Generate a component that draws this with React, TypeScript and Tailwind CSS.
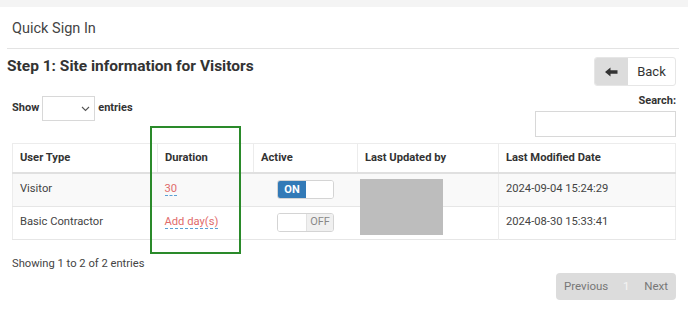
import React from 'react';

const rows = [
  { type: 'Visitor', duration: '30', active: true, date: '2024-09-04 15:24:29' },
  { type: 'Basic Contractor', duration: 'Add day(s)', active: false, date: '2024-08-30 15:33:41' },
];

const Toggle = ({ on }: { on: boolean }) => (
  <div className="mx-auto flex h-[19px] w-[57px] overflow-hidden rounded-[3px] border border-[#d4d4d4] bg-white">
    {on ? (
      <>
        <div className="flex w-[28px] items-center justify-center bg-[#337ab7] text-[11px] font-bold text-white">ON</div>
        <div className="flex-1 bg-white" />
      </>
    ) : (
      <>
        <div className="w-[28px] bg-white" />
        <div className="flex flex-1 items-center justify-center border-l border-[#e2e2e2] bg-[#f0f0f0] text-[11px] text-[#888]">OFF</div>
      </>
    )}
  </div>
);

const App = () => {
  return (
    <div className="relative h-[315px] w-[688px] overflow-hidden bg-white font-['Roboto',sans-serif] text-[#333]">
      <div className="h-[7px] bg-[#f4f4f4]" />

      {/* panel title */}
      <div className="mr-[9px] ml-[7px] flex h-[42px] items-center border-b border-[#e3e3e3] pt-[2px] pl-[5px] text-[14.5px] text-[#444]">
        Quick Sign In
      </div>

      <div className="pr-[12px] pl-[7px]">
        <div className="flex items-start justify-between pt-[8px]">
          <h3 className="text-[15.5px] leading-[19px] font-bold text-[#333]">Step 1: Site information for Visitors</h3>
          <button className="flex h-[29px] w-[82px] overflow-hidden rounded-[3px] border border-[#e6e6e6] bg-white">
            <span className="flex h-full w-[33px] items-center justify-center bg-[#dcdcdc]">
              <svg width="13" height="10" viewBox="0 0 13 10">
                <path d="M0 5 L5.5 0.5 L5.5 3.3 L12.5 3.3 L12.5 6.7 L5.5 6.7 L5.5 9.5 Z" fill="#333" />
              </svg>
            </span>
            <span className="flex flex-1 items-center justify-center text-[13px] text-[#333]">Back</span>
          </button>
        </div>

        <div className="flex items-start justify-between pl-[5px]">
          <div className="mt-[10px] flex items-center gap-[3px] text-[11px] font-bold">
            <span>Show</span>
            <div className="flex h-[25px] w-[53px] items-center justify-end border border-[#d8d8d8] pr-[4px]">
              <svg width="9" height="6" viewBox="0 0 9 6">
                <path d="M1 1 L4.5 4.5 L8 1" stroke="#555" strokeWidth="1.1" fill="none" />
              </svg>
            </div>
            <span>entries</span>
          </div>
          <div className="mt-[7px] flex flex-col items-end">
            <span className="text-[11px] font-bold">Search:</span>
            <div className="mt-[1px] h-[26px] w-[141px] border border-[#d8d8d8]" />
          </div>
        </div>

        <table className="mt-[6px] ml-[5px] w-[663px] table-fixed border-collapse border border-[#ececec] text-[11.2px]">
          <colgroup>
            <col className="w-[145px]" />
            <col className="w-[96px]" />
            <col className="w-[104px]" />
            <col className="w-[141px]" />
            <col className="w-[177px]" />
          </colgroup>
          <thead>
            <tr className="h-[30px] border-b-2 border-[#e0e0e0] text-left">
              <th className="border-r border-[#ececec] px-[7px] pt-[2px] font-bold">User Type</th>
              <th className="border-r border-[#ececec] px-[7px] pt-[2px] font-bold">Duration</th>
              <th className="border-r border-[#ececec] px-[7px] pt-[2px] font-bold">Active</th>
              <th className="border-r border-[#ececec] px-[7px] pt-[2px] font-bold">Last Updated by</th>
              <th className="px-[7px] pt-[2px] font-bold">Last Modified Date</th>
            </tr>
          </thead>
          <tbody>
            {rows.map((r, i) => (
              <tr key={r.type} className={`h-[33px] border-b border-[#e6e6e6] ${i === 0 ? 'bg-[#f9f9f9]' : 'bg-white'}`}>
                <td className="px-[7px] text-[#444]">{r.type}</td>
                <td className="px-[7px]">
                  <span className="border-b border-dashed border-[#5a9fd4] text-[#df6b6b]">{r.duration}</span>
                </td>
                <td className="px-[7px]">
                  <Toggle on={r.active} />
                </td>
                <td className="relative border-r border-[#ececec] px-[7px]">
                  {i === 0 && <div className="absolute top-[5px] left-[2px] z-10 h-[56px] w-[83px] bg-[#bdbdbd]" />}
                </td>
                <td className="px-[7px] text-[#444]">{r.date}</td>
              </tr>
            ))}
          </tbody>
        </table>

        <div className="mt-[16px] ml-[5px] text-[11.2px] text-[#444]">Showing 1 to 2 of 2 entries</div>

        <div className="mt-[1px] flex justify-end">
          <div className="flex h-[27px] w-[120px] items-center justify-between rounded-[4px] bg-[#dcdcdc] px-[8px] text-[11.5px] text-[#777]">
            <span>Previous</span>
            <span className="text-[#f5f5f5]">1</span>
            <span>Next</span>
          </div>
        </div>
      </div>

      {/* highlight box around Duration column */}
      <div className="absolute top-[126px] left-[150px] h-[128px] w-[91px] border-2 border-[#2a8a2a]" />
    </div>
  );
};

export default App;
